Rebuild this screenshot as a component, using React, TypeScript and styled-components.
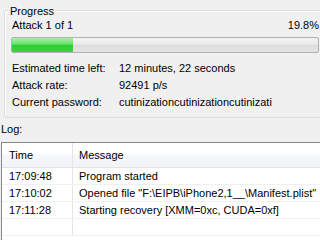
import React from "react";
import styled, { createGlobalStyle } from "styled-components";

const Global = createGlobalStyle`
  *, *::before, *::after { box-sizing: border-box; }
  html, body { margin: 0; padding: 0; }
  body {
    width: 320px;
    height: 240px;
    overflow: hidden;
    background: #f0f0f0;
    font-family: "Liberation Sans", Arial, sans-serif;
    font-size: 11px;
    color: #000;
  }
`;

const Window = styled.div`
  width: 320px;
  height: 240px;
  overflow: hidden;
  display: flex;
  flex-direction: column;
  background: #f0f0f0;
`;

const GroupBox = styled.div`
  position: relative;
  flex-shrink: 0;
  margin: 10px -6px 0 4px;
  height: 108px;
  border: 1px solid #d5dfe5;
  border-radius: 3px;
  box-shadow: inset 1px 1px 0 #fff;
  padding: 8px 6px 0 6px;
  display: flex;
  flex-direction: column;
`;

const Legend = styled.span`
  position: absolute;
  top: -6px;
  left: 3px;
  padding: 0 2px;
  background: #f0f0f0;
  line-height: 13px;
`;

const AttackRow = styled.div`
  display: flex;
  justify-content: space-between;
  line-height: 13px;
  padding-left: 1px;
`;

const Bar = styled.div`
  margin-top: 5px;
  height: 16px;
  flex-shrink: 0;
  border: 1px solid #b2b2b2;
  border-radius: 2px;
  background: linear-gradient(#f3f3f3 0%, #eaeaea 45%, #dcdcdc 50%, #e4e4e4 100%);
  overflow: hidden;
  display: flex;
`;

const Fill = styled.div`
  height: 100%;
  background: linear-gradient(#a6f0a6 0%, #6fe36f 40%, #2ecf2e 55%, #3ad53a 100%);
`;

const InfoGrid = styled.div`
  margin-top: 7px;
  display: grid;
  grid-template-columns: 107px 1fr;
  line-height: 17px;
  padding-left: 1px;
  white-space: nowrap;
`;

const LogLabel = styled.div`
  flex-shrink: 0;
  margin: 5px 0 0 1px;
  line-height: 13px;
`;

const ListBox = styled.div`
  margin: 6px 0 0 1px;
  flex: 1;
  min-height: 0;
  overflow: hidden;
  border-top: 1px solid #828790;
  border-left: 1px solid #828790;
  background: #fff;
`;

const Row = styled.div<{ $header?: boolean }>`
  display: grid;
  grid-template-columns: 71px 1fr;
  height: ${(p) => (p.$header ? "25px" : "17px")};
  border-bottom: 1px solid ${(p) => (p.$header ? "#e2e3e5" : "#f0f0f0")};
  background: ${(p) =>
    p.$header ? "linear-gradient(#ffffff 0%, #ffffff 45%, #f6f7f9 50%, #f3f4f6 100%)" : "#fff"};
  white-space: nowrap;
`;

const Cell = styled.div`
  display: flex;
  align-items: center;
  padding-left: 7px;
  border-right: 1px solid #e5e5e5;
  overflow: hidden;
  &:last-child {
    border-right: none;
    padding-left: 6px;
  }
`;

const logs = [
  ["17:09:48", "Program started"],
  ["17:10:02", 'Opened file "F:\\EIPB\\iPhone2,1__\\Manifest.plist"'],
  ["17:11:28", "Starting recovery [XMM=0xc, CUDA=0xf]"],
  ["", ""],
];

export default function App() {
  const pct = 19.8;
  return (
    <Window>
      <Global />
      <GroupBox>
        <Legend>Progress</Legend>
        <AttackRow>
          <span>Attack 1 of 1</span>
          <span>19.8%</span>
        </AttackRow>
        <Bar>
          <Fill style={{ width: `${pct}%` }} />
        </Bar>
        <InfoGrid>
          <span>Estimated time left:</span>
          <span>12 minutes, 22 seconds</span>
          <span>Attack rate:</span>
          <span>92491 p/s</span>
          <span>Current password:</span>
          <span>cutinizationcutinizationcutinizati</span>
        </InfoGrid>
      </GroupBox>
      <LogLabel>Log:</LogLabel>
      <ListBox>
        <Row $header>
          <Cell>Time</Cell>
          <Cell>Message</Cell>
        </Row>
        {logs.map(([t, m], i) => (
          <Row key={i}>
            <Cell>{t}</Cell>
            <Cell>{m}</Cell>
          </Row>
        ))}
      </ListBox>
    </Window>
  );
}
